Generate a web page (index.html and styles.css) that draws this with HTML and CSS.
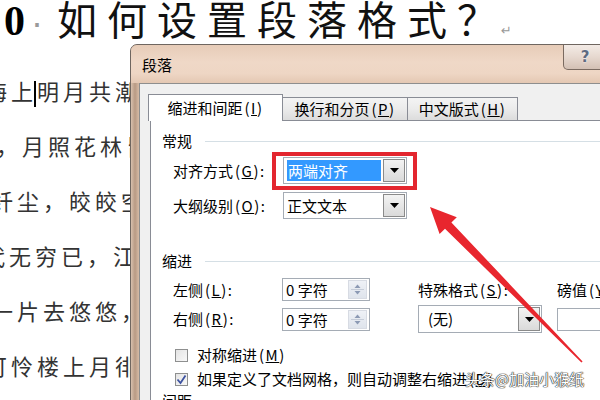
FILE: index.html
```html
<!DOCTYPE html>
<html lang="zh">
<head>
<meta charset="utf-8">
<link rel="stylesheet" href="styles.css">
</head>
<body>
<div class="doc">
  <div class="heading"><span class="num">0</span><span class="dot">·</span><span class="title">如何设置段落格式？</span><span class="ret">↵</span></div>
  <div class="poem">
    <p class="l1">海上<span class="caret"></span>明月共潮生。</p>
    <p class="l2">，月照花林皆似霰。</p>
    <p class="l3">纤尘，皎皎空中孤月轮。</p>
    <p class="l4">代无穷已，江月年年望相似。</p>
    <p class="l5">一片去悠悠，青枫浦上不胜愁。</p>
    <p class="l6">可怜楼上月徘徊，应照离人妆镜台。</p>
  </div>
</div>

<div class="dialog">
  <div class="titlebar">
    <span class="dtitle">段落</span>
    <span class="help">?</span>
  </div>
  <div class="client">
    <div class="tabs">
      <div class="tab active">缩进和间距<span class="mn">(<u>I</u>)</span></div>
      <div class="tab t2">换行和分页<span class="mn">(<u>P</u>)</span></div>
      <div class="tab t3">中文版式<span class="mn">(<u>H</u>)</span></div>
    </div>
    <div class="panel">
      <div class="group"><span>常规</span><i class="rule"></i></div>
      <div class="row r1">
        <label>对齐方式<span class="mn">(<u>G</u>)</span>:</label>
        <div class="combo"><span class="value"><span class="sel">两端对齐</span></span><span class="drop"><svg width="9" height="5" viewBox="0 0 9 5"><path d="M0 0h9L4.5 5z" fill="#000"/></svg></span></div>
      </div>
      <div class="row r2">
        <label>大纲级别<span class="mn">(<u>O</u>)</span>:</label>
        <div class="combo"><span class="value">正文文本</span><span class="drop"><svg width="9" height="5" viewBox="0 0 9 5"><path d="M0 0h9L4.5 5z" fill="#000"/></svg></span></div>
      </div>
      <div class="group g2"><span>缩进</span><i class="rule"></i></div>
      <div class="indent-grid">
        <label>左侧<span class="mn">(<u>L</u>)</span>:</label>
        <div class="spin"><span class="sval">0 字符</span><span class="spinbtn"><svg width="17" height="17" viewBox="0 0 17 17"><path d="M5.5 7h6L8.5 3.5z" fill="#8c9ab4"/><path d="M5.5 10h6L8.5 13.5z" fill="#8c9ab4"/><path d="M2 8.5h13" stroke="#c5ccd8" stroke-width="1"/></svg></span></div>
        <label>特殊格式<span class="mn">(<u>S</u>)</span>:</label>
        <label>磅值<span class="mn">(<u>Y</u>)</span>:</label>
        <label>右侧<span class="mn">(<u>R</u>)</span>:</label>
        <div class="spin"><span class="sval">0 字符</span><span class="spinbtn"><svg width="17" height="17" viewBox="0 0 17 17"><path d="M5.5 7h6L8.5 3.5z" fill="#8c9ab4"/><path d="M5.5 10h6L8.5 13.5z" fill="#8c9ab4"/><path d="M2 8.5h13" stroke="#c5ccd8" stroke-width="1"/></svg></span></div>
        <div class="combo special"><span class="value pad">(无)</span><span class="drop"><svg width="9" height="5" viewBox="0 0 9 5"><path d="M0 0h9L4.5 5z" fill="#000"/></svg></span></div>
        <div class="input"></div>
      </div>
      <div class="check c1"><span class="box"></span>对称缩进<span class="mn">(<u>M</u>)</span></div>
      <div class="check c2"><span class="box"><svg width="11" height="11" viewBox="0 0 11 11"><path d="M1.5 5.5l3 3.5L9.5 1.5" fill="none" stroke="#3d52a0" stroke-width="1.8"/></svg></span>如果定义了文档网格，则自动调整右缩进<span class="mn">(<u>D</u>)</span></div>
      <div class="group g3"><span>间距</span><i class="rule"></i></div>
    </div>
  </div>
</div>

<div class="redbox"></div>
<svg class="arrow" width="600" height="400" viewBox="0 0 600 400">
  <polygon points="430,207 456.8,217.2 451.4,222.45 582.6,361.4 581.4,362.6 445,228.75 439.6,234" fill="#e8262e"/>
</svg>
<div class="watermark">头条@加油小猴纸</div>
</body>
</html>
```

FILE: styles.css
```css
html, body {
  margin: 0;
  padding: 0;
  width: 600px;
  height: 400px;
  overflow: hidden;
  background: #fff;
}
body {
  position: relative;
  font-family: "Noto Sans CJK SC", "Noto Sans", sans-serif;
}

/* document behind the dialog */
.heading {
  display: flex;
  align-items: baseline;
  height: 40px;
  line-height: 40px;
  white-space: nowrap;
  padding-left: 4px;
  margin-top: -2px;
}
.num {
  font-family: "Liberation Serif", serif;
  font-weight: bold;
  font-size: 42px;
  color: #000;
}
.dot {
  font-family: "Liberation Sans", sans-serif;
  font-size: 36px;
  color: #9a9a9a;
  margin: 0 14px 0 6px;
}
.title {
  font-size: 40px;
  letter-spacing: 10px;
  color: #111;
}
.ret {
  font-family: "DejaVu Sans", sans-serif;
  font-size: 13px;
  color: #999;
  margin-left: -6px;
}
.poem {
  margin-top: 25px;
}
.poem p {
  margin: 0;
  height: 55px;
  line-height: 55px;
  font-size: 22px;
  letter-spacing: 4px;
  color: #333;
  white-space: nowrap;
}
.poem .l1 { margin-left: -15px; }
.poem .l2 { margin-left: -4px; }
.poem .l3 { margin-left: -9px; }
.poem .l4 { margin-left: -17px; }
.poem .l5 { margin-left: -9px; }
.poem .l6 { margin-left: -15px; }
.caret {
  display: inline-block;
  width: 2px;
  height: 26px;
  background: #000;
  vertical-align: middle;
  margin-left: -3px;
  margin-right: 1px;
}

/* dialog window */
.dialog {
  position: absolute;
  left: 130px;
  top: 44px;
  width: 484px;
  height: 380px;
  box-sizing: border-box;
  border: 1px solid #6f6660;
  border-radius: 7px 7px 0 0;
  background: linear-gradient(to right, #d8c0ad 0, #b89a84 4px, #d6bba6 8px);
  padding-left: 8px;
  display: flex;
  flex-direction: column;
  font-size: 15px;
  color: #000;
}
.mn {
  letter-spacing: 1.5px;
  margin-left: 2px;
}
.titlebar {
  height: 38px;
  margin-left: -8px;
  padding-left: 11px;
  display: flex;
  border-radius: 6px 6px 0 0;
  background: linear-gradient(to bottom, #e7ccb8 0, #efd8c7 45%, #eed6c4 75%, #e4c8b3 100%);
}
.dtitle {
  align-self: center;
  line-height: 18px;
  margin-top: 2px;
}
.help {
  margin-left: auto;
  margin-right: 6px;
  width: 44px;
  height: 25px;
  box-sizing: border-box;
  border: 1px solid #7a6a60;
  border-top: none;
  border-radius: 0 0 5px 5px;
  background: linear-gradient(to bottom, #f3ebe6 0, #e6d8cf 50%, #d3c0b4 100%);
  font-family: "DejaVu Sans", sans-serif;
  font-weight: bold;
  font-size: 15px;
  line-height: 24px;
  text-align: center;
  color: #5e6b82;
  text-shadow: 0 0 2px #fff;
}
.client {
  flex: 1;
  background: #f0f0f0;
  border-top: 1px solid #8e8e8e;
  border-left: 1px solid #8e8e8e;
  padding: 10px 0 0 8px;
  display: flex;
  flex-direction: column;
}
.tabs {
  display: flex;
  align-items: flex-end;
  height: 27px;
  margin-bottom: -1px;
  position: relative;
  z-index: 1;
}
.tab {
  box-sizing: border-box;
  border: 1px solid #898c95;
  border-bottom: none;
  text-align: center;
  white-space: nowrap;
}
.tab.active {
  width: 135px;
  height: 27px;
  line-height: 26px;
  background: #fff;
}
.tab.t2, .tab.t3 {
  height: 23px;
  line-height: 21px;
  margin-bottom: 1px;
  background: linear-gradient(to bottom, #f4f4f4 0, #ebebeb 50%, #dcdcdc 100%);
}
.tab.t2 { width: 126px; margin-left: -1px; }
.tab.t3 { width: 111px; margin-left: -1px; }

.panel {
  flex: 1;
  margin-left: 2px;
  background: #fff;
  border-top: 1px solid #898c95;
  border-left: 1px solid #898c95;
  padding: 11px 0 0 11px;
}
.group {
  display: flex;
  align-items: center;
  height: 18px;
  line-height: 18px;
}
.group .rule {
  flex: 1;
  height: 1px;
  background: #d5dfe5;
  margin-left: 13px;
}
.group.g2 { margin-top: 33px; }
.group.g3 { margin-top: 3px; }

.row {
  display: flex;
  align-items: center;
  padding-left: 11px;
}
.row.r1 { margin-top: 7px; }
.row.r2 { margin-top: 8px; }
.row label {
  width: 110px;
  line-height: 18px;
  white-space: nowrap;
}

.combo {
  display: flex;
  width: 124px;
  height: 27px;
  box-sizing: border-box;
  border: 1px solid #a5acb5;
  background: #fff;
}
.combo .value {
  flex: 1;
  margin: 2px 1px 2px 3px;
  line-height: 21px;
  white-space: nowrap;
  overflow: hidden;
}
.combo .value.pad { padding-left: 6px; }
.sel {
  display: block;
  background: #3399ff;
  color: #fff;
  padding-left: 1px;
}
.drop {
  width: 22px;
  margin: 1px;
  box-sizing: border-box;
  border: 1px solid #8a8a8a;
  background: linear-gradient(to bottom, #f3f3f3, #dadada);
  display: flex;
  align-items: center;
  justify-content: center;
}

.indent-grid {
  display: grid;
  grid-template-columns: 109px 136px 139px 1fr;
  grid-template-rows: 23px 28px;
  row-gap: 4px;
  align-items: center;
  padding-left: 11px;
  margin-top: 8px;
}
.indent-grid label {
  line-height: 18px;
  white-space: nowrap;
}
.spin {
  display: flex;
  align-items: center;
  width: 88px;
  height: 23px;
  box-sizing: border-box;
  border: 1px solid #a5acb5;
  background: #fff;
}
.sval {
  flex: 1;
  padding-left: 3px;
  line-height: 19px;
  white-space: nowrap;
}
.spinbtn {
  width: 19px;
  height: 19px;
  margin-right: 2px;
  box-sizing: border-box;
  border: 1px solid #d7dbe3;
  background: linear-gradient(to bottom, #eef1f6, #dfe4ec);
  display: flex;
  align-items: center;
  justify-content: center;
}
.combo.special {
  width: 124px;
  height: 28px;
}
.input {
  width: 60px;
  height: 23px;
  box-sizing: border-box;
  border: 1px solid #a5acb5;
  background: #fff;
}

.check {
  display: flex;
  align-items: center;
  height: 20px;
  line-height: 18px;
  padding-left: 13px;
  white-space: nowrap;
}
.check.c1 { margin-top: 12px; }
.check.c2 { margin-top: 4px; }
.check .box {
  width: 13px;
  height: 13px;
  box-sizing: border-box;
  border: 1px solid #8e8f8f;
  background: linear-gradient(135deg, #e4e4e4, #f8f8f8);
  margin-right: 9px;
  display: flex;
  align-items: center;
  justify-content: center;
}

/* overlays */
.redbox {
  position: absolute;
  left: 272px;
  top: 152px;
  width: 145px;
  height: 38px;
  box-sizing: border-box;
  border: 4px solid #e3262f;
}
.arrow {
  position: absolute;
  left: 0;
  top: 0;
}
.watermark {
  position: absolute;
  left: 465px;
  top: 369px;
  line-height: 20px;
  font-size: 15px;
  color: #fff;
  white-space: nowrap;
  text-shadow: 0 0 1px #222, 0 0 1px #222, 0 0 1px #222;
}
```
